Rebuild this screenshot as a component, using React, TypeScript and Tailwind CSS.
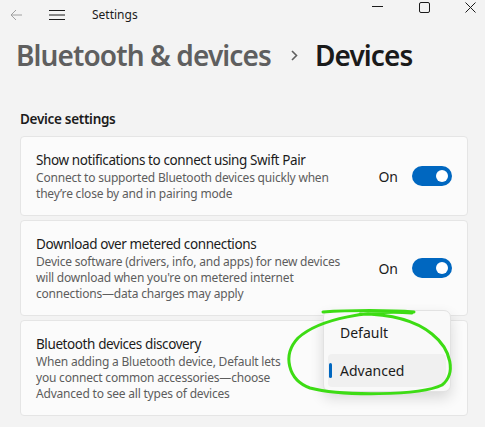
import React from "react";

const font = { fontFamily: '"Segoe UI", "Noto Sans", "Open Sans", sans-serif' };

function Toggle() {
  return (
    <div className="flex h-[20px] w-[40px] items-center justify-end rounded-full bg-[#0067c0] pr-[4px]">
      <div className="h-[12px] w-[12px] rounded-full bg-white" />
    </div>
  );
}

function SettingCard({ title, lines, toggle }: { title: string; lines: string[]; toggle?: boolean }) {
  return (
    <div className="flex items-center justify-between rounded-[4px] border border-[#e5e5e5] bg-[#fbfbfb] py-[13px] pl-[15px] pr-[15px]">
      <div>
        <p className="text-[13.5px] leading-[20px] tracking-[-0.4px] text-[#1b1b1b]">{title}</p>
        {lines.map((l) => (
          <p key={l} className="text-[12px] leading-[16px] tracking-[-0.2px] text-[#5d5d5d]">{l}</p>
        ))}
      </div>
      {toggle && (
        <div className="flex items-center gap-[14px]">
          <span className="text-[14px] text-[#1b1b1b]">On</span>
          <Toggle />
        </div>
      )}
    </div>
  );
}

export default function App() {
  return (
    <div style={font} className="relative h-[427px] w-[485px] overflow-hidden bg-[#f3f3f3]">
      {/* title bar */}
      <div className="flex h-[30px] items-center">
        <svg className="ml-[10px]" width="13" height="12" viewBox="0 0 13 12" fill="none" stroke="#a0a0a0" strokeWidth="1">
          <path d="M12 6H1M6 1L1 6l5 5" />
        </svg>
        <svg className="ml-[26px]" width="16" height="12" viewBox="0 0 16 12" fill="none" stroke="#1b1b1b" strokeWidth="1">
          <path d="M0 1.5h16M0 6h16M0 10.5h16" />
        </svg>
        <span className="ml-[27px] text-[12px] text-[#1b1b1b]">Settings</span>
        <div className="ml-auto flex h-full items-start">
          <svg className="mr-[36px] mt-[6px]" width="11" height="2" viewBox="0 0 11 2"><path d="M0 .5h11" stroke="#1b1b1b" /></svg>
          <svg className="mr-[35px] mt-[2px]" width="11" height="11" viewBox="0 0 11 11" fill="none"><rect x=".5" y=".5" width="10" height="10" rx="1.5" stroke="#1b1b1b" /></svg>
          <svg className="mr-[9px] mt-[2px]" width="11" height="11" viewBox="0 0 11 11" fill="none" stroke="#1b1b1b"><path d="M.5.5l10 10M10.5.5l-10 10" /></svg>
        </div>
      </div>

      {/* heading */}
      <div className="mt-[5px] flex items-center pl-[16px] text-[28px] font-semibold leading-[40px] tracking-[-0.9px]">
        <span className="text-[#5f5f5f]">Bluetooth &amp; devices</span>
        <svg className="ml-[20px] mr-[17px]" width="7" height="11" viewBox="0 0 7 11" fill="none" stroke="#5f5f5f" strokeWidth="1.6">
          <path d="M1 1l4.5 4.5L1 10" />
        </svg>
        <span className="text-[#1a1a1a]">Devices</span>
      </div>

      <p className="mt-[34px] pl-[20px] text-[13.5px] font-semibold leading-[20px] tracking-[-0.3px] text-[#1b1b1b]">Device settings</p>

      <div className="mt-[7px] flex flex-col gap-[4px] pl-[20px] pr-[17px]">
        <SettingCard
          title="Show notifications to connect using Swift Pair"
          lines={["Connect to supported Bluetooth devices quickly when", "they’re close by and in pairing mode"]}
          toggle
        />
        <SettingCard
          title="Download over metered connections"
          lines={["Device software (drivers, info, and apps) for new devices", "will download when you're on metered internet", "connections—data charges may apply"]}
          toggle
        />
        <SettingCard
          title="Bluetooth devices discovery"
          lines={["When adding a Bluetooth device, Default lets", "you connect common accessories—choose", "Advanced to see all types of devices"]}
        />
      </div>

      {/* dropdown menu */}
      <div className="absolute left-[323px] top-[310px] flex w-[128px] flex-col gap-[4px] rounded-[7px] border border-[#e2e2e2] bg-[#f9f9f9] p-[4px] shadow-[0_6px_14px_rgba(0,0,0,0.14)]">
        <div className="flex h-[35px] items-center pl-[12px] text-[14px] text-[#1b1b1b]">Default</div>
        <div className="relative flex h-[33px] items-center rounded-[4px] bg-[#f0f0f0] pl-[12px] text-[14px] text-[#1b1b1b]">
          <span className="absolute left-[1px] top-[9px] h-[15px] w-[3px] rounded-full bg-[#0067c0]" />
          Advanced
        </div>
      </div>

      {/* green annotation */}
      <svg className="pointer-events-none absolute left-0 top-0" width="485" height="427" viewBox="0 0 485 427" fill="none">
        <path
          d="M323 312 C350 310 390 310 414 312 M412 313 C370 310 320 318 298 338 C282 355 288 380 310 388 C340 396 420 396 442 385 C456 374 452 350 432 334 C415 320 390 314 360 314"
          stroke="#3ddc14"
          strokeWidth="3"
          strokeLinecap="round"
        />
      </svg>
    </div>
  );
}
